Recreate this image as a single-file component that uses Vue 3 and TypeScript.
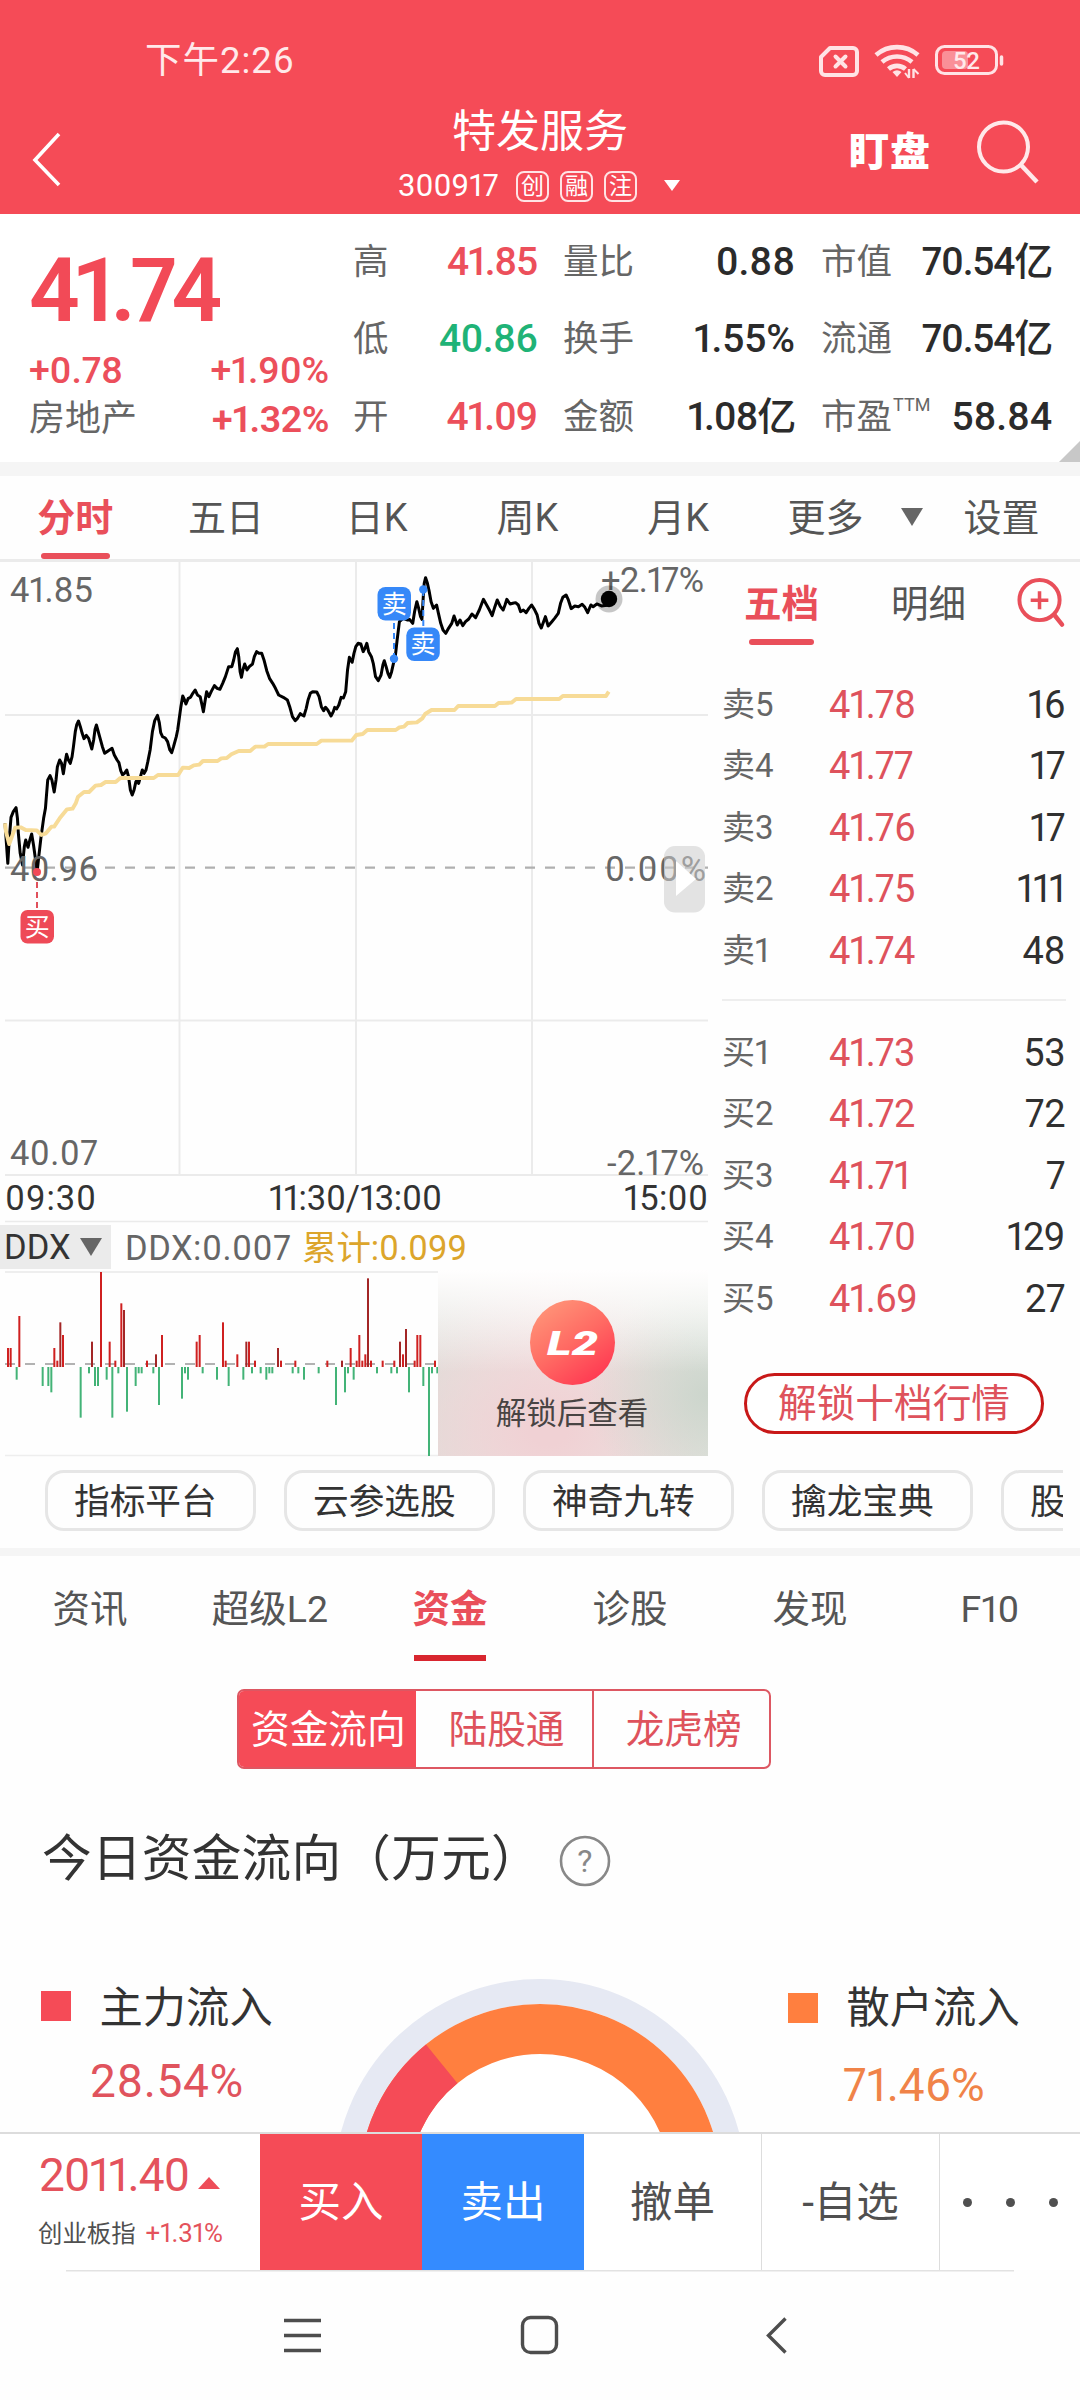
<script setup lang="ts">
interface Quote { label: string; value: string; tone: string; sup?: string }
interface Level { name: string; price: string; qty: number }

const quoteCols: { key: string; rows: Quote[] }[] = [
  { key: 'a', rows: [
    { label: '高', value: '41.85', tone: 'up' },
    { label: '低', value: '40.86', tone: 'down' },
    { label: '开', value: '41.09', tone: 'up' },
  ] },
  { key: 'b', rows: [
    { label: '量比', value: '0.88', tone: 'ink' },
    { label: '换手', value: '1.55%', tone: 'ink' },
    { label: '金额', value: '1.08亿', tone: 'ink' },
  ] },
  { key: 'c', rows: [
    { label: '市值', value: '70.54亿', tone: 'ink' },
    { label: '流通', value: '70.54亿', tone: 'ink' },
    { label: '市盈', value: '58.84', tone: 'ink', sup: 'TTM' },
  ] },
]

const periods = ['分时', '五日', '日K', '周K', '月K']
const asks: Level[] = [
  { name: '卖5', price: '41.78', qty: 16 },
  { name: '卖4', price: '41.77', qty: 17 },
  { name: '卖3', price: '41.76', qty: 17 },
  { name: '卖2', price: '41.75', qty: 111 },
  { name: '卖1', price: '41.74', qty: 48 },
]
const bids: Level[] = [
  { name: '买1', price: '41.73', qty: 53 },
  { name: '买2', price: '41.72', qty: 72 },
  { name: '买3', price: '41.71', qty: 7 },
  { name: '买4', price: '41.70', qty: 129 },
  { name: '买5', price: '41.69', qty: 27 },
]
const chips = ['指标平台', '云参选股', '神奇九转', '擒龙宝典', '股东户数']
const sections = ['资讯', '超级L2', '资金', '诊股', '发现', 'F10']

// Intraday price and average lines, in sample units (scaled by the chart group)
const priceLine = '11,1060 14,1120 17,1180 20,1110 24,1042 29,1025 35,1013 38,1045 40,1090 44,1150 49,1185 53,1130 56,1110 61,1132 65,1110 69,1092 73,1125 77,1165 81,1205 84,1165 89,1105 95,1045 99,1015 101,980 104,930 109,917 113,930 118,966 122,930 125,890 130,870 134,880 138,911 142,875 145,853 149,870 153,880 157,860 160,830 164,785 167,765 171,753 175,770 179,790 183,806 188,796 193,805 200,837 204,810 207,778 210,765 213,780 217,800 223,830 228,850 236,842 244,835 249,855 255,870 259,878 263,902 267,915 271,910 276,900 280,920 284,960 288,975 292,960 296,935 299,930 302,940 306,920 310,900 314,910 318,900 322,875 327,840 332,785 337,752 343,736 347,758 350,788 354,800 360,804 365,815 370,840 374,848 378,830 384,800 387,780 390,750 394,710 398,678 402,690 405,702 410,685 415,682 420,670 425,660 430,675 436,680 440,705 443,725 447,690 450,665 455,680 460,665 467,647 473,655 479,658 485,640 491,620 498,590 505,590 509,570 513,545 517,536 520,560 523,605 526,622 529,600 533,582 538,600 543,590 550,582 554,560 559,545 564,550 570,550 575,570 581,602 587,625 594,640 600,655 607,675 617,682 626,690 631,710 637,740 643,752 648,745 654,731 658,735 662,738 667,715 671,690 676,670 681,665 690,666 695,680 700,710 705,722 709,712 714,720 721,738 726,725 729,712 733,717 738,705 743,682 748,684 753,665 757,600 761,562 764,570 767,577 771,550 775,530 780,520 786,522 791,545 795,535 799,520 803,545 809,560 813,580 818,620 824,632 830,615 834,585 837,572 841,590 845,610 849,622 853,605 857,580 861,560 865,510 870,455 878,445 888,450 892,448 899,460 903,425 908,395 912,415 916,440 919,448 922,380 924,340 927,323 931,340 935,365 939,395 944,415 951,405 955,430 960,460 965,480 971,490 977,475 984,460 989,438 996,465 1002,450 1008,467 1014,455 1021,447 1028,432 1036,443 1044,420 1053,388 1060,405 1066,420 1072,437 1078,410 1083,390 1090,410 1096,420 1100,405 1104,388 1111,402 1117,400 1123,398 1129,405 1134,425 1140,420 1146,428 1152,415 1158,405 1164,418 1170,435 1174,460 1179,474 1184,455 1188,440 1194,468 1202,455 1208,445 1216,430 1221,400 1226,382 1233,375 1238,390 1244,416 1252,408 1260,410 1268,403 1274,412 1280,428 1287,405 1292,410 1300,402 1310,408 1326,405'
const averageLine = '11,1060 13,1085 20,1122 26,1100 33,1073 45,1072 56,1080 80,1081 90,1095 100,1090 112,1070 118,1070 130,1045 146,1018 158,1016 165,1000 170,980 183,966 194,966 208,947 220,945 230,936 252,936 262,924 335,924 344,915 388,915 398,893 412,894 422,886 434,884 442,873 474,873 482,865 494,864 504,853 520,843 545,843 556,830 576,830 584,822 690,822 700,812 766,812 776,795 790,792 800,780 862,780 870,772 880,770 888,759 908,757 920,745 926,732 940,720 990,720 998,708 1078,708 1086,699 1114,698 1124,687 1218,687 1226,678 1320,678 1326,665'

// DDX histogram: [x, extent], in thirds of a pixel; the zero edge is at 351
const ZERO = 351
const inflow: [number, number][] = [[24, 294], [32, 294], [58, 198], [163, 294], [172, 332], [181, 217], [189, 255], [276, 275], [303, 66], [329, 275], [346, 332], [364, 160], [372, 180], [441, 332], [468, 313], [486, 255], [590, 275], [599, 255], [669, 217], [677, 332], [712, 313], [739, 275], [747, 275], [765, 332], [834, 294], [843, 332], [886, 332], [982, 332], [1026, 332], [1052, 294], [1070, 332], [1078, 255], [1087, 332], [1096, 313], [1104, 85], [1113, 332], [1148, 332], [1183, 332], [1200, 275], [1209, 313], [1218, 237], [1244, 332], [1252, 255], [1261, 255], [1305, 332]]
const outflow: [number, number][] = [[50, 389], [128, 408], [145, 408], [154, 427], [242, 503], [267, 370], [285, 408], [294, 408], [320, 389], [337, 503], [355, 370], [381, 485], [407, 408], [416, 370], [425, 370], [460, 370], [477, 465], [546, 446], [555, 370], [564, 389], [608, 370], [651, 389], [686, 408], [730, 389], [756, 370], [782, 370], [799, 389], [808, 370], [817, 370], [878, 370], [895, 370], [912, 389], [956, 370], [1008, 465], [1035, 427], [1044, 370], [1061, 389], [1131, 370], [1174, 370], [1191, 370], [1227, 427], [1270, 408], [1287, 618], [1296, 370], [1312, 370]]
const darkBars = [181, 276, 372, 468, 739, 834, 1026, 1104, 1200, 1218]
</script>

<template>
  <div class="screen">
    <header class="top">
      <div class="status">
        <span class="clock">下午2:26</span>
        <svg class="sys" width="192" height="40" viewBox="814 40 192 40" fill="none" stroke="#ffe3e5">
          <path d="M830 48H853a4 4 0 0 1 4 4V71a4 4 0 0 1-4 4H825a4 4 0 0 1-4-4V57Z" stroke-width="4" stroke-linejoin="round" />
          <path d="M835.500 56.500l10 10M845.500 56.500l-10 10" stroke-width="4" stroke-linecap="round" />
          <path d="M876 55a32 32 0 0 1 42 0M882 62a23 23 0 0 1 30 0M888.500 69a13 13 0 0 1 17 0" stroke-width="4.600" />
          <path d="M892.500 72q4.500-3.500 9 0l-4.500 5Z" fill="#ffe3e5" stroke="none" />
          <path d="M909 69v9M913.500 78v-9" stroke-width="2.400" /><path d="M909 78l-4-5M913.500 69l5 5" stroke-width="2" />
          <rect x="936.500" y="46.500" width="60" height="27" rx="8" stroke-width="3" />
          <path d="M1001.500 57v7" stroke-width="3.500" stroke-linecap="round" />
          <rect x="942" y="51" width="26" height="18" rx="4" fill="#fa9098" stroke="none" />
          <text x="953" y="69" textLength="27" font-size="24" fill="#ffe9ea" stroke="none" font-weight="500">52</text>
        </svg>
      </div>
      <div class="nav">
        <svg class="back" width="40" height="60" viewBox="0 0 40 60" fill="none" stroke="#fff" stroke-width="3.600"><path d="M30 4L6 30l24 25" /></svg>
        <div class="heading">
          <h1>特发服务</h1>
          <div class="sub">
            <span class="code">300917</span>
            <i class="badge">创</i><i class="badge">融</i><i class="badge">注</i>
            <svg class="caret" width="18" height="12" viewBox="0 0 18 12"><path d="M1 0H17L9 11Z" fill="#fff" /></svg>
          </div>
        </div>
        <span class="watch">盯盘</span>
        <svg class="find" width="66" height="66" viewBox="974 118 66 66" fill="none" stroke="#ffe9ea" stroke-width="4"><circle cx="1003.500" cy="147" r="24.500" /><path d="M1021 165l16 17" stroke-width="4.500" /></svg>
      </div>
    </header>

    <section class="quote">
      <div class="last">
        <div class="price">41.74</div>
        <div class="pair up"><span>+0.78</span><span>+1.90%</span></div>
        <div class="pair"><span class="sector">房地产</span><b class="up">+1.32%</b></div>
      </div>
      <div v-for="c in quoteCols" :key="c.key" class="qcol" :class="c.key">
        <div v-for="q in c.rows" :key="q.label" class="qrow">
          <span class="ql">{{ q.label }}<sup v-if="q.sup">{{ q.sup }}</sup></span>
          <span class="qv" :class="[q.tone, { tight: q.value.endsWith('亿') }]">{{ q.value }}</span>
        </div>
      </div>
      <i class="fold"></i>
    </section>
    <div class="gap"></div>

    <nav class="periods">
      <span v-for="(p, i) in periods" :key="p" class="period" :class="{ on: i === 0 }">{{ p }}</span>
      <span class="more">更多</span>
      <svg class="tri" width="22" height="18" viewBox="0 0 22 18"><path d="M0 0H22L11 18Z" fill="#666" /></svg>
      <span class="setup">设置</span>
    </nav>

    <section class="market">
      <div class="charts">
        <svg class="minute" width="720" height="662" viewBox="0 562 720 662">
          <g stroke="#ebebeb" stroke-width="2">
            <path d="M179.500 562V1175M356 562V1175M532 562V1175" />
            <path d="M5 715H708M5 1020.500H708M5 1175H708" /><path d="M5 1221.500H708" stroke-width="1.500" />
          </g>
          <path d="M5 867.700H708" stroke="#b0b0b0" stroke-width="2.200" stroke-dasharray="10 10" />
          <g transform="translate(0 470) scale(.4591 .33333)" fill="none" stroke-linejoin="round">
            <polyline :points="priceLine" stroke="#000" stroke-width="3" vector-effect="non-scaling-stroke" />
            <polyline :points="averageLine" stroke="#f7db97" stroke-width="3.900" vector-effect="non-scaling-stroke" />
          </g>
          <g class="axis" fill="#666">
            <text x="10" y="602" textLength="83">41.85</text>
            <text x="10" y="881" textLength="88">40.96</text>
            <text x="10" y="1165" textLength="88">40.07</text>
            <text x="601" y="592" textLength="103">+2.17%</text>
            <text x="605" y="881" textLength="101">0.00%</text>
            <text x="607" y="1175" textLength="97">-2.17%</text>
          </g>
          <g class="axis" fill="#333">
            <text x="5" y="1210" textLength="91">09:30</text>
            <text x="269" y="1210" textLength="173">11:30/13:00</text>
            <text x="624" y="1210" textLength="84">15:00</text>
          </g>
          <circle cx="609" cy="599" r="13.500" fill="#000" opacity=".22" /><circle cx="609" cy="599" r="8.200" />
          <path d="M394 659V620M423.300 590V627" stroke="#3688f8" stroke-width="2" stroke-dasharray="6 4" />
          <g fill="#3688f8"><circle cx="394" cy="658.700" r="4.200" /><circle cx="423.300" cy="589.500" r="4.200" /><rect x="377.500" y="587" width="33.500" height="33.500" rx="8" /><rect x="406.300" y="627.500" width="33.500" height="33.500" rx="8" /></g>
          <path d="M37 882V910" stroke="#e0505b" stroke-width="2" stroke-dasharray="6 4" />
          <circle cx="37" cy="872" r="4" fill="#f24a57" /><rect x="20.500" y="910" width="33.500" height="33.500" rx="7" fill="#ee4a57" />
          <g class="tag"><text x="394.200" y="612.500">卖</text><text x="423" y="653">卖</text><text x="37.200" y="935.500">买</text></g>
          <rect x="664" y="846" width="41" height="66.500" rx="11" fill="#ccc" fill-opacity=".55" /><path d="M676 861L696 879L676 896Z" fill="#fff" />
        </svg>
        <div class="ddx-head">
          <span class="ddx-pick">DDX<svg width="22" height="18" viewBox="0 0 22 18"><path d="M0 0H22L11 18Z" fill="#666" /></svg></span>
          <span class="ddx-val">DDX:0.007</span><span class="ddx-sum">累计:0.099</span>
        </div>
        <div class="ddx">
          <svg width="438" height="187" viewBox="0 1270 438 187">
            <path d="M5 1272H438" stroke="#eee" stroke-width="2" /><path d="M5 1455.500H438" stroke="#eee" stroke-width="1.300" />
            <path d="M5 1364H438" stroke="#b2b2b2" stroke-width="2.200" stroke-dasharray="10 10" />
            <g transform="translate(0 1250) scale(.33333)">
              <rect v-for="b in inflow" :key="b[0]" :x="b[0] - 3" :y="b[1]" width="6" :height="ZERO - b[1]" :fill="darkBars.includes(b[0]) ? '#a32626' : '#cf2020'" />
              <rect v-for="b in outflow" :key="b[0]" :x="b[0] - 3" :y="ZERO" width="6" :height="b[1] - ZERO" fill="#43b377" />
            </g>
          </svg>
          <div class="lock"><span class="coin"><b>L2</b></span><span>解锁后查看</span></div>
        </div>
      </div>

      <aside class="book">
        <div class="book-tabs">
          <span class="bt on">五档</span><span class="bt">明细</span>
          <svg width="52" height="54" viewBox="1014 575 52 54" fill="none" stroke="#e94f5a" stroke-width="4"><circle cx="1039" cy="600" r="20.500" /><path d="M1054 615l8 10" stroke-linecap="round" stroke-width="4.500" /><path d="M1030 600.300h18M1039 591v18.500" stroke-width="3.600" /></svg>
        </div>
        <div class="levels">
          <div v-for="l in asks" :key="l.name" class="level"><span class="ln">{{ l.name }}</span><span class="lp">{{ l.price }}</span><span class="lq">{{ l.qty }}</span></div>
        </div>
        <hr />
        <div class="levels">
          <div v-for="l in bids" :key="l.name" class="level"><span class="ln">{{ l.name }}</span><span class="lp">{{ l.price }}</span><span class="lq">{{ l.qty }}</span></div>
        </div>
        <button class="unlock">解锁十档行情</button>
      </aside>
    </section>

    <div class="chips"><span v-for="c in chips" :key="c" class="chip">{{ c }}</span></div>
    <div class="gap thin"></div>

    <nav class="sections"><span v-for="(s, i) in sections" :key="s" :class="{ on: i === 2 }">{{ s }}</span></nav>
    <div class="segments"><span class="on">资金流向</span><span>陆股通</span><span>龙虎榜</span></div>
    <h2>今日资金流向（万元）<svg width="54" height="54" viewBox="0 0 54 54" fill="none" stroke="#888" stroke-width="2.600"><circle cx="27" cy="27" r="24" /><text x="27" y="38" text-anchor="middle" font-size="32" fill="#888" stroke="none">?</text></svg></h2>

    <section class="flow">
      <div class="leg main"><div class="name"><i></i>主力流入</div><div class="pct">28.54%</div></div>
      <svg class="donut" width="420" height="154" viewBox="330 1978 420 154" fill="none">
        <circle cx="540" cy="2185" r="206" fill="#e6e9f3" /><circle cx="540" cy="2185" r="181" fill="#fff" />
        <circle cx="540" cy="2185" r="156" stroke="#ff7f3f" stroke-width="50" />
        <path d="M384 2185A156 156 0 0 1 441.700 2063.900" stroke="#f54b57" stroke-width="50" />
      </svg>
      <div class="leg retail"><div class="name"><i></i>散户流入</div><div class="pct">71.46%</div></div>
    </section>

    <footer class="trade">
      <div class="index">
        <div class="iv"><span>2011.40</span><svg width="22" height="12" viewBox="0 0 22 12"><path d="M0 12L11 0L22 12Z" fill="#ee4d59" /></svg></div>
        <div class="in">创业板指<span>+1.31%</span></div>
      </div>
      <div class="act buy">买入</div><div class="act sell">卖出</div>
      <div class="act plain">撤单</div><div class="act plain">-自选</div>
      <div class="act dots"><i></i><i></i><i></i></div>
    </footer>
    <div class="gesture">
      <svg width="1080" height="130" viewBox="0 2270 1080 130" fill="none" stroke="#4d4d4d" stroke-width="3.400">
        <path d="M66 2270.800H1014" stroke="#e2e2e2" stroke-width="1.500" />
        <path d="M284 2320.500h37M284 2335.500h37M284 2350.500h37" /><rect x="522.500" y="2317.500" width="34" height="35" rx="8" /><path d="M785.500 2318.500L768.500 2335.500l17 17" />
      </svg>
    </div>
  </div>
</template>

<style>
body { background: #fff; }
</style>

<style scoped>
.screen { width: 1080px; height: 2400px; overflow: hidden; background: #fefefe; color: #333; font-family: Roboto, "Noto Sans CJK SC", sans-serif; font-feature-settings: "pnum"; display: flex; flex-direction: column; }
.screen > * { flex: none; }
i { font-style: normal; }
.up { color: #ec4f5b; } .down { color: #1fb377; } .ink { color: #2b2b2b; }

.top { height: 214px; background: #f54b57; color: #fff; }
.status { height: 100px; box-sizing: border-box; padding: 40px 74px 0 145px; display: flex; justify-content: space-between; }
.clock { font-size: 36.500px; line-height: 42px; letter-spacing: 1px; color: #ffe9ea; }
.nav { height: 114px; display: flex; position: relative; }
.back { margin: 30px 0 0 29px; }
.heading { position: absolute; left: 340px; width: 400px; top: 0; }
h1 { margin: 6px 0 0; font-size: 44px; line-height: 52px; font-weight: 400; text-align: center; }
.sub { display: flex; align-items: center; height: 34px; margin: 11px 0 0 58px; }
.code { font-size: 31px; width: 118px; line-height: 34px; }
.badge { box-sizing: border-box; width: 33px; height: 31px; border: 2px solid #ffe3e5; border-radius: 8px; font-size: 23px; line-height: 27px; text-align: center; margin-right: 11px; }
.caret { margin-left: 15px; }
.watch { margin: 26px 0 0 780px; font-size: 40px; line-height: 54px; font-weight: 900; letter-spacing: 1px; }
.find { margin: 18px 0 0 43px; }

.quote { height: 248px; display: flex; position: relative; font-size: 38px; background: #fff; }
.last { width: 300px; margin-left: 29px; }
.price { margin-top: 27px; height: 105px; line-height: 100px; font-size: 89px; font-weight: 600; letter-spacing: -5.600px; color: #f24a57; }
.pair { display: flex; justify-content: space-between; line-height: 49px; height: 49px; font-weight: 500; font-size: 37.500px; letter-spacing: -.2px; }
.pair b { font-weight: 600; letter-spacing: -.4px; }
.sector { color: #666; font-size: 36px; font-weight: 400; letter-spacing: 0; }
.qcol { padding-top: 9.500px; }
.qrow { display: flex; justify-content: space-between; height: 77.600px; line-height: 77px; white-space: nowrap; }
.qcol.a { width: 184px; margin-left: 24px; } .qcol.b { width: 232px; margin-left: 26px; } .qcol.c { width: 231px; margin-left: 26px; }
.ql { color: #666; font-size: 35.500px; }
.ql sup { font-size: 18px; line-height: 1; vertical-align: 18px; margin-left: 1px; }
.qv { font-weight: 500; font-size: 39px; letter-spacing: -.1px; }
.qv.tight, .qv.up { letter-spacing: -1.200px; } .qv.down { letter-spacing: -.7px; }
.fold { position: absolute; right: 0; bottom: 0; width: 21px; height: 21px; background: #c8c8c8; clip-path: polygon(100% 0, 100% 100%, 0 100%); }
.gap { height: 14px; background: #f5f5f5; }
.gap.thin { height: 8px; }

.periods { height: 86px; box-sizing: border-box; border-bottom: 3px solid #ebebeb; display: flex; font-size: 38px; line-height: 84px; color: #555; }
.period { width: 150.700px; text-align: center; position: relative; }
.period.on, .bt.on { color: #e94f5a; font-weight: 700; }
.period.on::after { content: ""; position: absolute; left: 41px; bottom: 0; width: 69px; height: 6px; border-radius: 3px; background: #e94f5a; }
.more { width: 76px; margin-left: 34px; } .tri { margin: 32px 0 0 38px; } .setup { margin-left: 40px; }

.market { height: 896px; display: flex; }
.charts { width: 720px; }
.minute { display: block; }
.axis text { font-size: 34.500px; } .tag text { font-size: 25px; fill: #fff; text-anchor: middle; }
.ddx-head { height: 46px; display: flex; font-size: 34.500px; line-height: 48px; color: #666; }
.ddx-pick { width: 111px; height: 44px; background: #ebebeb; color: #333; box-sizing: border-box; padding-left: 4px; margin-top: 1px; white-space: nowrap; line-height: 45px; display: flex; align-items: center; }
.ddx-pick svg { margin: 0 0 1px 9px; }
.ddx-val { margin-left: 14px; width: 177px; letter-spacing: .5px; } .ddx-sum { color: #dca52b; letter-spacing: -.1px; }
.ddx { height: 187px; display: flex; }
.lock { width: 270px; height: 186px; display: flex; flex-direction: column; align-items: center; box-sizing: border-box; padding: 30px 2px 0 0; font-size: 30.500px; line-height: 46px; color: #484443; gap: 6px;
  background: linear-gradient(#fffefe 0, #fffefe00 55%), radial-gradient(ellipse 120px 110px at 270px 125px, #ccd5cc, #ccd5cc00), radial-gradient(ellipse 190px 150px at 110px 160px, #f0d1d4 10%, #f0d1d400), linear-gradient(90deg, #dfe0db, #efe6e4 40%, #e2e8e1); }
.coin { width: 85px; height: 85px; border-radius: 50%; background: linear-gradient(145deg, #ff9478 10%, #ff6a63 50%, #ff3d53 85%); color: #fff; font: italic 900 34px/87px Roboto, sans-serif; text-align: center; }
.coin b { display: inline-block; font-weight: 900; transform: scaleX(1.38); }

.book { width: 344px; margin-left: 2px; }
.book-tabs { height: 112px; display: flex; }
.bt { width: 74px; margin-left: 22px; font-size: 37.500px; line-height: 84px; color: #555; position: relative; white-space: nowrap; }
.bt + .bt { margin-left: 73px; }
.bt.on::after { content: ""; position: absolute; left: 5px; top: 77px; width: 65px; height: 6px; border-radius: 3px; background: #e94f5a; }
.book-tabs svg { margin: 13px 0 0 50px; }
.level { height: 61.400px; line-height: 62px; display: flex; }
.ln { width: 107px; font-size: 33px; color: #666; }
.lp { flex: 1; font-size: 38px; letter-spacing: -.6px; color: #de525c; } .lq { font-size: 38px; letter-spacing: -.5px; color: #303030; padding-right: 1px; }
hr { margin: 18px 0 21px; border: 0; height: 2px; background: #eee; }
.unlock { display: block; box-sizing: border-box; width: 300px; height: 61px; margin: 44px 0 0 22px; padding: 0; border: 3px solid #c81818; border-radius: 31px; background: #fff; color: #de525c; font: inherit; font-size: 38.700px; line-height: 56px; }

.chips { height: 90px; width: 1063px; box-sizing: border-box; padding: 12px 0 0 45px; display: flex; gap: 28px; overflow: hidden; }
.chip { flex: none; box-sizing: border-box; width: 211px; height: 61px; border: 3px solid #e6e6e6; border-radius: 19px; padding-left: 26px; font-size: 35.700px; line-height: 58px; white-space: nowrap; }
.sections { height: 105px; display: flex; font-size: 37.500px; line-height: 106px; color: #555; }
.sections span { width: 180px; text-align: center; }
.sections .on { color: #e94f5a; font-weight: 700; position: relative; }
.sections .on::after { content: ""; position: absolute; left: 54px; bottom: 0; width: 72px; height: 6px; background: #d8262f; }
.segments { box-sizing: border-box; width: 534px; height: 80px; margin: 28px 0 0 237px; border: 2px solid #dd5762; border-radius: 7px; display: flex; font-size: 38.700px; line-height: 78px; color: #de525c; overflow: hidden; }
.segments span { width: 177px; text-align: center; box-sizing: border-box; padding-left: 5px; }
.segments span + span + span { border-left: 2px solid #dd5762; padding-left: 4px; }
.segments .on { background: #f54b57; color: #fff; padding-left: 2px; }
h2 { margin: 50px 0 0 42px; height: 80px; display: flex; align-items: center; font-size: 49.600px; line-height: 76px; letter-spacing: .3px; font-weight: 400; color: #333; }
h2 svg { margin: 4px 0 0 17px; }

.flow { height: 233px; display: flex; align-items: flex-end; }
.donut { display: block; }
.leg { height: 154px; } .leg.main { width: 330px; } .leg.retail { width: 330px; }
.name { height: 60px; line-height: 62px; font-size: 43.300px; color: #333; white-space: nowrap; display: flex; }
.name i { width: 30px; height: 30px; margin: 13px 28.500px 0 41px; background: #f54b57; }
.retail .name i { background: #ff7f3f; margin: 15px 28.500px 0 38px; }
.pct { font-size: 46px; line-height: 60px; margin: 13px 0 0 90px; color: #e0535d; letter-spacing: .6px; }
.retail .pct { margin: 17px 0 0 93px; color: #f08348; letter-spacing: 0; }

.trade { height: 138px; box-sizing: border-box; border-top: 2px solid #dcdcdc; display: flex; background: #fff; color: #505050; }
.index { width: 260px; box-sizing: border-box; padding: 11px 0 0 39px; }
.iv { display: flex; height: 60px; line-height: 60px; font-size: 46px; letter-spacing: -1px; color: #e4525c; }
.iv span { width: 159px; } .iv svg { margin-top: 32px; }
.in { font-size: 24.400px; line-height: 40px; margin-top: 8px; margin-left: -1px; white-space: nowrap; } .in span { margin-left: 10px; font-size: 25.800px; color: #e4525c; }
.act { height: 136px; line-height: 138px; text-align: center; font-size: 42.500px; width: 178px; box-sizing: border-box; }
.buy, .sell { width: 162px; color: #fff; } .buy { background: #f54b57; } .sell { background: #348bff; }
.plain { border-right: 1.500px solid #ddd; }
.dots { width: 140px; display: flex; align-items: center; gap: 34px; padding: 0 0 0 23px; } .dots i { width: 9px; height: 9px; border-radius: 50%; background: #505050; }
.gesture { height: 130px; } .gesture svg { display: block; }
</style>
